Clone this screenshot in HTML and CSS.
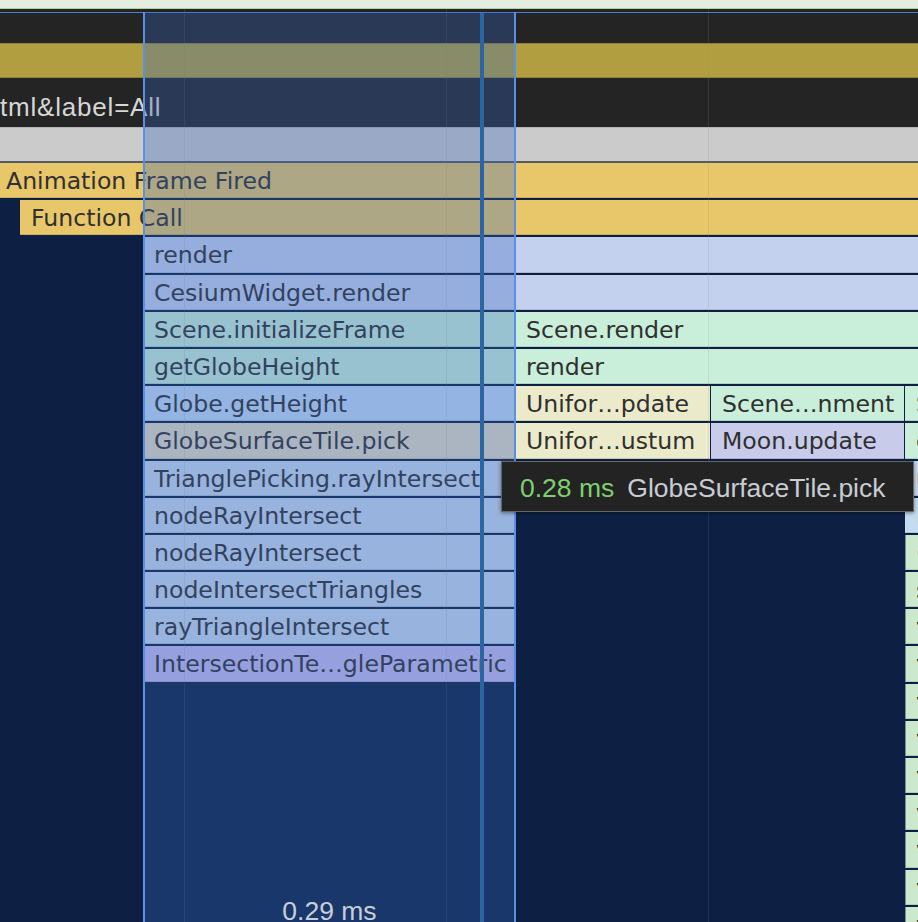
FILE: index.html
```html
<!DOCTYPE html>
<html lang="en">
<head>
<meta charset="utf-8">
<title>Flame chart</title>
<link rel="stylesheet" href="styles.css">
</head>
<body>
<div class="timeline">
  <div class="top-strip"></div>
  <div class="top-line"></div>
  <div class="top-gap"></div>
  <div class="frame-line"></div>
  <div class="track track-dark"></div>
  <div class="track track-gold"></div>
  <div class="track track-url"><span class="url">tml&amp;label=All</span></div>
  <div class="track track-gray"></div>
  <div class="track-sep"></div>

  <div class="flame">
    <div class="row">
      <div class="bar c-yellow first" style="margin-left:0;width:918px">Animation Frame Fired</div>
    </div>
    <div class="row">
      <div class="bar c-yellow" style="margin-left:20px;width:898px">Function Call</div>
    </div>
    <div class="row">
      <div class="bar c-blue" style="margin-left:143px;width:775px">render</div>
    </div>
    <div class="row">
      <div class="bar c-blue" style="margin-left:143px;width:775px">CesiumWidget.render</div>
    </div>
    <div class="row">
      <div class="bar c-green" style="margin-left:143px;width:372px">Scene.initializeFrame</div>
      <div class="bar c-green" style="width:403px">Scene.render</div>
    </div>
    <div class="row">
      <div class="bar c-green" style="margin-left:143px;width:372px">getGlobeHeight</div>
      <div class="bar c-green" style="width:403px">render</div>
    </div>
    <div class="row">
      <div class="bar c-sky" style="margin-left:143px;width:372px">Globe.getHeight</div>
      <div class="bar c-beige" style="width:195px">Unifor…pdate</div>
      <div class="bar c-green" style="margin-left:1px;width:193px">Scene…nment</div>
      <div class="bar c-green" style="margin-left:1px;width:13px">Scene</div>
    </div>
    <div class="row">
      <div class="bar c-tan" style="margin-left:143px;width:372px">GlobeSurfaceTile.pick</div>
      <div class="bar c-beige" style="width:195px">Unifor…ustum</div>
      <div class="bar c-lav" style="margin-left:1px;width:193px">Moon.update</div>
      <div class="bar c-green" style="margin-left:1px;width:13px">computeFrustum</div>
    </div>
    <div class="row">
      <div class="bar c-steel" style="margin-left:143px;width:372px">TrianglePicking.rayIntersect</div>
      <div class="bar c-steel" style="margin-left:390px;width:13px">update</div>
    </div>
    <div class="row">
      <div class="bar c-steel" style="margin-left:143px;width:372px">nodeRayIntersect</div>
      <div class="bar c-ice" style="margin-left:390px;width:13px">Item</div>
    </div>
    <div class="row">
      <div class="bar c-steel" style="margin-left:143px;width:372px">nodeRayIntersect</div>
      <div class="bar c-mint" style="margin-left:390px;width:13px">(anonymous)</div>
    </div>
    <div class="row">
      <div class="bar c-steel" style="margin-left:143px;width:372px">nodeIntersectTriangles</div>
      <div class="bar c-mint" style="margin-left:390px;width:13px">set</div>
    </div>
    <div class="row">
      <div class="bar c-steel" style="margin-left:143px;width:372px">rayTriangleIntersect</div>
      <div class="bar c-mint" style="margin-left:390px;width:13px">visit</div>
    </div>
    <div class="row">
      <div class="bar c-violet" style="margin-left:143px;width:372px">IntersectionTe…gleParametric</div>
      <div class="bar c-mint" style="margin-left:390px;width:13px">visit</div>
    </div>
    <div class="row"><div class="bar c-mint" style="margin-left:905px;width:13px">visit</div></div>
    <div class="row"><div class="bar c-mint" style="margin-left:905px;width:13px">visit</div></div>
    <div class="row"><div class="bar c-mint" style="margin-left:905px;width:13px">visit</div></div>
    <div class="row"><div class="bar c-mint" style="margin-left:905px;width:13px">visit</div></div>
    <div class="row"><div class="bar c-mint" style="margin-left:905px;width:13px">visit</div></div>
    <div class="row"><div class="bar c-mint" style="margin-left:905px;width:13px">visit</div></div>
    <div class="row"><div class="bar c-mint" style="margin-left:905px;width:13px">visit</div></div>
  </div>

  <div class="gridline g1"></div>
  <div class="gridline g2"></div>
  <div class="gridline g3"></div>
  <div class="selection"></div>
  <div class="cursor"></div>
  <div class="sel-label">0.29 ms</div>
  <div class="tooltip"><span class="tt-time">0.28 ms</span><span class="tt-name">GlobeSurfaceTile.pick</span></div>
</div>
</body>
</html>
```

FILE: styles.css
```css
html, body {
  margin: 0;
  padding: 0;
}
body {
  background: #0d2043;
  width: 918px;
  height: 922px;
  overflow: hidden;
}
.timeline {
  position: relative;
  width: 918px;
  height: 922px;
  overflow: hidden;
  background: #0d2043;
}
.top-strip {
  height: 8px;
  background: #e3eee0;
}
.top-line {
  height: 1px;
  background: #b2d3a4;
}
.top-gap {
  height: 3px;
  background: #242424;
}
.frame-line {
  height: 1px;
  background: #4b80d0;
}
.track {
  box-sizing: border-box;
}
.track-dark {
  height: 30px;
  background: #242424;
}
.track-gold {
  height: 35px;
  background: #b09e40;
  border-top: 1px solid #8f8136;
  border-bottom: 1px solid #8f8136;
}
.track-url {
  height: 48.5px;
  background: #242424;
  padding-top: 14px;
  line-height: 30px;
  font-family: "Liberation Sans", Arial, sans-serif;
  font-size: 26px;
  color: #d6d6d6;
  white-space: nowrap;
}
.url {
  letter-spacing: 0.8px;
}
.track-gray {
  height: 34.5px;
  background: #cbcbcb;
  border-top: 1px solid #b5b5b5;
}
.track-sep {
  height: 2px;
  background: #555a63;
}
.flame {
  display: flex;
  flex-direction: column;
}
.row {
  display: flex;
  height: 35.2px;
  margin-bottom: 2px;
}
.bar {
  flex: none;
  box-sizing: border-box;
  height: 100%;
  padding: 0 11px;
  font-family: "DejaVu Sans", Verdana, sans-serif;
  font-size: 23.6px;
  line-height: 37px;
  color: #303030;
  white-space: nowrap;
  overflow: hidden;
  box-shadow: inset 0 -1px 0 rgba(0, 0, 0, 0.12);
}
.bar.first {
  padding-left: 6px;
}
.c-yellow { background: #e8c66a; }
.c-blue { background: #c3d1ef; }
.c-green { background: #c9efda; }
.c-sky { background: #c2dbf7; }
.c-beige { background: #ebebcb; }
.c-tan { background: #e4dbc3; }
.c-lav { background: #c9cbea; }
.c-steel { background: #c8d8ee; }
.c-ice { background: #c4dcf0; }
.c-mint { background: #cde9cd; box-shadow: inset 1px 0 0 #7f8f9c, inset 0 -1px 0 rgba(0, 0, 0, 0.12); }
.c-violet { background: #c7bcf1; }

.gridline {
  position: absolute;
  top: 9px;
  bottom: 0;
  width: 1px;
  background: rgba(140, 140, 140, 0.18);
}
.g1 { left: 184px; }
.g2 { left: 446px; }
.g3 { left: 708px; }

.selection {
  position: absolute;
  left: 143px;
  top: 12px;
  width: 373px;
  bottom: 0;
  box-sizing: border-box;
  border-left: 2px solid #5b8fe3;
  border-right: 2px solid #5b8fe3;
  background: rgba(54, 104, 188, 0.33);
}
.cursor {
  position: absolute;
  left: 480px;
  top: 13px;
  bottom: 0;
  width: 4px;
  background: #2d64a2;
}
.sel-label {
  position: absolute;
  left: 143px;
  width: 373px;
  top: 896px;
  text-align: center;
  font-family: "Liberation Sans", Arial, sans-serif;
  font-size: 26.5px;
  color: #c9ced8;
  white-space: nowrap;
}
.tooltip {
  position: absolute;
  left: 501px;
  top: 461px;
  width: 413px;
  height: 51px;
  box-sizing: border-box;
  background: #232323;
  border: 1px solid #676767;
  box-shadow: 0 1px 4px rgba(0, 0, 0, 0.45);
  padding: 4px 0 0 18px;
  display: flex;
  align-items: center;
  gap: 13px;
  font-family: "Liberation Sans", Arial, sans-serif;
  font-size: 26.5px;
  white-space: nowrap;
}
.tt-time {
  color: #7fcf70;
}
.tt-name {
  color: #c8ccd4;
}
```
